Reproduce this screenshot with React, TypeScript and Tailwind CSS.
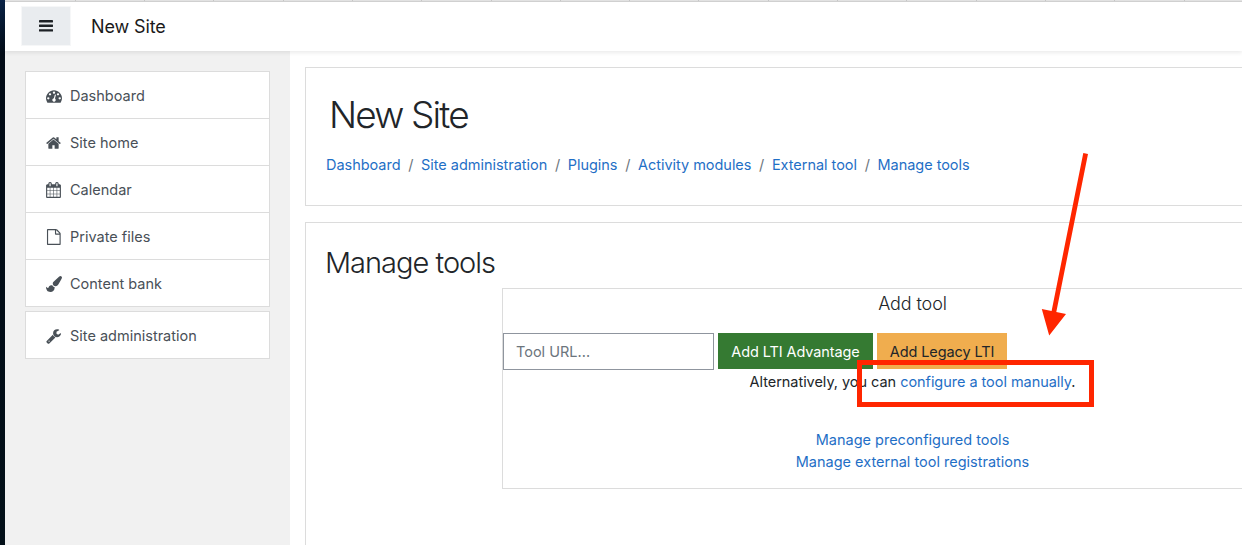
import React from "react";

const icons = {
  dashboard: {
    x: 0,
    d: "M384 1152q0-53-37.5-90.5t-90.5-37.5-90.5 37.5-37.5 90.5 37.5 90.5 90.5 37.5 90.5-37.5 37.5-90.5zm192-448q0-53-37.5-90.5t-90.5-37.5-90.5 37.5-37.5 90.5 37.5 90.5 90.5 37.5 90.5-37.5 37.5-90.5zm428 481l101-382q6-26-7.5-48.5t-38.5-29.5-48 6.5-30 39.5l-101 382q-60 5-107 43.5t-63 98.5q-20 77 20 146t117 89 146-20 89-117q16-60-6-117t-72-91zm660-33q0-53-37.5-90.5t-90.5-37.5-90.5 37.5-37.5 90.5 37.5 90.5 90.5 37.5 90.5-37.5 37.5-90.5zm-640-640q0-53-37.5-90.5t-90.5-37.5-90.5 37.5-37.5 90.5 37.5 90.5 90.5 37.5 90.5-37.5 37.5-90.5zm448 192q0-53-37.5-90.5t-90.5-37.5-90.5 37.5-37.5 90.5 37.5 90.5 90.5 37.5 90.5-37.5 37.5-90.5zm320 448q0 261-141 483-19 29-54 29h-1402q-35 0-54-29-141-221-141-483 0-182 71-348t191-286 286-191 348-71 348 71 286 191 191 286 71 348z",
  },
  home: {
    x: 56,
    d: "M1472 992v480q0 26-19 45t-45 19h-384v-384h-256v384h-384q-26 0-45-19t-19-45v-480q0-1 .5-3t.5-3l575-474 575 474q1 2 1 6zm223-69l-62 74q-8 9-21 11h-3q-13 0-21-7l-692-577-692 577q-12 8-24 7-13-2-21-11l-62-74q-8-10-7-23.5t11-21.5l719-599q32-26 76-26t76 26l244 204v-195q0-14 9-23t23-9h192q14 0 23 9t9 23v408l219 182q10 8 11 21.5t-7 23.5z",
  },
  calendar: {
    x: 56,
    d: "M192 1664h288v-288h-288v288zm352 0h320v-288h-320v288zm-352-352h288v-320h-288v320zm352 0h320v-320h-320v320zm-352-384h288v-288h-288v288zm736 736h320v-288h-320v288zm-384-736h320v-288h-320v288zm768 736h288v-288h-288v288zm-384-352h320v-320h-320v320zm-352-864v-288q0-13-9.5-22.5t-22.5-9.5h-64q-13 0-22.5 9.5t-9.5 22.5v288q0 13 9.5 22.5t22.5 9.5h64q13 0 22.5-9.5t9.5-22.5zm736 864h288v-320h-288v320zm-384-384h320v-288h-320v288zm384 0h288v-288h-288v288zm32-480v-288q0-13-9.5-22.5t-22.5-9.5h-64q-13 0-22.5 9.5t-9.5 22.5v288q0 13 9.5 22.5t22.5 9.5h64q13 0 22.5-9.5t9.5-22.5zm384-64v1280q0 52-38 90t-90 38h-1408q-52 0-90-38t-38-90v-1280q0-52 38-90t90-38h128v-96q0-66 47-113t113-47h64q66 0 113 47t47 113v96h384v-96q0-66 47-113t113-47h64q66 0 113 47t47 113v96h128q52 0 90 38t38 90z",
  },
  file: {
    x: 20,
    d: "M1596 380q28 28 48 76t20 88v1152q0 40-28 68t-68 28h-1344q-40 0-68-28t-28-68v-1600q0-40 28-68t68-28h896q40 0 88 20t76 48zm-444-244v376h376q-10-29-22-41l-313-313q-12-12-41-22zm384 1528v-1024h-416q-40 0-68-28t-28-68v-416h-768v1536h1280z",
  },
  brush: {
    x: 0,
    d: "M1615 0q70 0 122.5 46.5t52.5 116.5q0 63-45 151-332 629-465 752-97 91-218 91-126 0-216.5-92.5t-90.5-219.5q0-128 92-212l638-579q59-54 130-54zm-909 1034q39 76 106.5 130t150.5 76l1 71q4 213-129.5 347t-348.5 134q-123 0-218-46.5t-152.5-127.5-86.5-183-29-220q7 5 41 30t62 44.5 59 36.5 46 17q41 0 55-37 25-66 57.5-112.5t69.5-76 88-47.5 103-25.5 125-10.5z",
  },
  wrench: {
    x: 40,
    d: "M448 1472q0-26-19-45t-45-19-45 19-19 45 19 45 45 19 45-19 19-45zm644-420l-682 682q-37 37-90 37-52 0-91-37l-106-108q-38-36-38-90 0-53 38-91l681-681q39 98 114.5 173.5t173.5 114.5zm634-435q0 39-23 106-47 134-164.5 217.5t-258.5 83.5q-185 0-316.5-131.5t-131.5-316.5 131.5-316.5 316.5-131.5q58 0 121.5 16.5t107.5 46.5q16 11 16 28t-16 28l-293 169v224l193 107q5-3 79-48.5t135.5-81 70.5-35.5q15 0 23.5 10t8.5 25z",
  },
};

type IconName = keyof typeof icons;

function NavItem({ icon, label }: { icon: IconName; label: string }) {
  return (
    <a className="flex h-[47px] items-center border-b border-[#dcdcdc] bg-white pt-px pl-5 text-[#495057]">
      <svg viewBox={`${icons[icon].x} 0 1792 1792`} className="mr-2 size-4" fill="currentColor">
        <path d={icons[icon].d} />
      </svg>
      <span>{label}</span>
    </a>
  );
}

const nav: { icon: IconName; label: string }[] = [
  { icon: "dashboard", label: "Dashboard" },
  { icon: "home", label: "Site home" },
  { icon: "calendar", label: "Calendar" },
  { icon: "file", label: "Private files" },
  { icon: "brush", label: "Content bank" },
];

const crumbs = ["Dashboard", "Site administration", "Plugins", "Activity modules", "External tool", "Manage tools"];

export default function App() {
  return (
    <div className="relative flex h-[545px] w-[1242px] overflow-hidden bg-white font-['Inter',sans-serif] text-[14.5px] leading-[22px] text-[#212529]">
      <div className="w-[5px] shrink-0 bg-linear-to-b from-[#0a2347] from-0% via-[#030c17] via-10% to-[#031019]" />
      <div className="flex min-w-0 flex-1 flex-col">
        <div className="flex h-0.5 shrink-0 border-b border-[#d2d2d2] bg-[#e2e2e2] pl-[1.5px]">
          {Array.from({ length: 17 }, (_, i) => (
            <div key={i} className="w-[69.3px] shrink-0 border-r border-[#c6c6c6]" />
          ))}
        </div>
        <header className="relative flex h-[49px] shrink-0 items-start bg-white pt-[5px] pl-[17px] shadow-[0_2px_4px_rgba(0,0,0,0.08)]">
          <button className="flex h-[38px] w-[48px] items-center justify-center bg-[#e9ecef] text-[#1d2125] ring-1 ring-[#f6f7f8]">
            <svg viewBox="0 0 14 12" className="h-3 w-3.5" fill="currentColor">
              <rect y="0" width="14" height="2.4" rx="0.4" />
              <rect y="4.6" width="14" height="2.4" rx="0.4" />
              <rect y="9.2" width="14" height="2.4" rx="0.4" />
            </svg>
          </button>
          <span className="mt-1.5 ml-[21px] text-[18px] leading-7 tracking-[-0.12px] text-[#1a1a1a]">New Site</span>
        </header>
        <div className="flex min-h-0 flex-1">
          <aside className="w-[285px] shrink-0 bg-[#f1f1f1] px-5 pt-5">
            <nav className="w-[245px] border-x border-t border-[#dcdcdc]">
              {nav.map((item) => (
                <NavItem key={item.label} {...item} />
              ))}
            </nav>
            <nav className="mt-1 w-[245px] border-x border-t border-[#dcdcdc]">
              <NavItem icon="wrench" label="Site administration" />
            </nav>
          </aside>
          <main className="min-w-0 flex-1 overflow-hidden pt-4 pl-[15px]">
            <section className="h-[139px] w-[1040px] border border-[#dcdcdc] pl-5">
              <h1 className="mt-[25px] ml-[3px] text-[37px] leading-[44px] font-light tracking-[-1.85px]">New Site</h1>
              <ol className="mt-[17px] flex tracking-[-0.03px] text-[#1f6fc6]">
                {crumbs.map((crumb, i) => (
                  <li key={crumb} className="flex">
                    {i > 0 && <span className="pr-[7.6px] pl-[7.7px] text-[#6c757d]">/</span>}
                    <a>{crumb}</a>
                  </li>
                ))}
              </ol>
            </section>
            <section className="mt-4 h-[400px] w-[1040px] border border-[#dcdcdc] pt-[22px] pl-5">
              <h2 className="-ml-px text-[29px] leading-9 font-light tracking-[-1px]">Manage tools</h2>
              <div className="mt-[7px] ml-[176px] h-[201px] w-[821px] border border-[#dcdcdc]">
                <h3 className="mt-1 text-center text-[18px] leading-[22px] font-light tracking-[-0.1px]">Add tool</h3>
                <form className="mt-[18px] flex items-start gap-1">
                  <div className="flex h-[37px] w-[211px] items-center border border-[#8f959e] pl-3 text-[#6c757d]">Tool URL...</div>
                  <button type="button" className="h-9 w-[155px] bg-[#357a32] pt-0.5 tracking-[-0.1px] text-white">Add LTI Advantage</button>
                  <button type="button" className="h-9 w-[130px] bg-[#f0ad4e] pt-0.5 tracking-[-0.1px]">Add Legacy LTI</button>
                </form>
                <p className="mt-px text-center tracking-[-0.04px]">
                  Alternatively, you can <a className="text-[#1f6fc6]">configure a tool manually</a>.
                </p>
                <div className="mt-9 flex flex-col items-center text-[#1f6fc6]">
                  <a>Manage preconfigured tools</a>
                  <a>Manage external tool registrations</a>
                </div>
              </div>
            </section>
          </main>
        </div>
      </div>
      <div className="absolute top-[360px] left-[857px] h-[47px] w-[237px] border-[5px] border-[#ff2600]" />
      <svg className="absolute top-[150px] left-[1035px] h-[190px] w-[60px]" viewBox="1035 150 60 190" fill="#ff2600">
        <path d="M1083.300 153L1088 154L1056.300 312L1066 314L1049.200 335.500L1041.800 309L1051.600 311Z" />
      </svg>
    </div>
  );
}
